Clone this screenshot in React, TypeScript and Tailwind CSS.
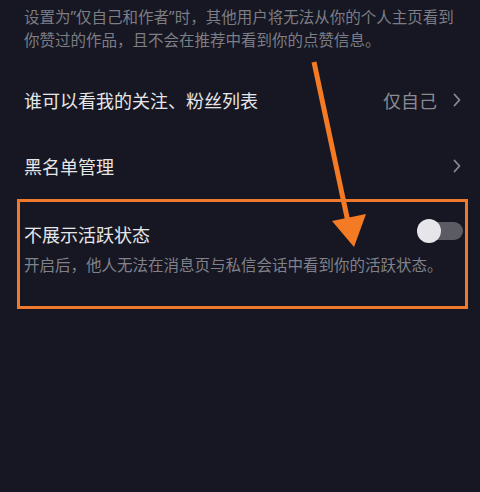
import React from 'react';

function Chevron() {
  return (
    <svg width="8" height="14" viewBox="0 0 8 14" fill="none">
      <path d="M1.5 1.5L6.5 7L1.5 12.5" stroke="#8a8b92" strokeWidth="1.8" strokeLinecap="round" strokeLinejoin="round" />
    </svg>
  );
}

function Toggle() {
  return (
    <div className="relative h-[24px] w-[46px]">
      <div className="absolute right-0 top-[3px] h-[18px] w-[38px] rounded-full bg-[#5b5c63]" />
      <div className="absolute left-0 top-0 h-[24px] w-[24px] rounded-full bg-[#e6e6ea]" />
    </div>
  );
}

// narrow latin quote inside CJK text
function Q() {
  return <span style={{ fontFamily: '"Noto Sans", sans-serif' }}>”</span>;
}

export default function App() {
  return (
    <div
      className="relative h-[492px] w-[480px] overflow-hidden bg-[#161722]"
      style={{ fontFamily: '"Noto Sans CJK SC", "Noto Sans", sans-serif' }}
    >
      {/* Description */}
      <p className="whitespace-nowrap pl-[24px] pt-[5px] text-[15.5px] leading-[22px] text-[#7c7d85]">
        设置为<Q />仅自己和作者<Q />时，其他用户将无法从你的个人主页看到
        <br />
        你赞过的作品，且不会在推荐中看到你的点赞信息。
      </p>

      {/* Rows */}
      <div className="mt-[17px]">
        <div className="flex h-[66px] items-center justify-between pl-[24px] pr-[19px]">
          <span className="text-[18px] text-[#e6e6e8]">谁可以看我的关注、粉丝列表</span>
          <div className="flex items-center gap-[16px]">
            <span className="text-[18px] text-[#8a8b92]">仅自己</span>
            <Chevron />
          </div>
        </div>
        <div className="flex h-[66px] items-center justify-between pl-[24px] pr-[19px]">
          <span className="text-[18px] text-[#e6e6e8]">黑名单管理</span>
          <Chevron />
        </div>
      </div>

      {/* Highlighted setting */}
      <div className="ml-[17px] mr-[12px] border-[3px] border-[#ef7a2e] pb-[31px] pl-[4px] pr-[2px] pt-[20px]">
        <div className="flex h-[24px] items-center justify-between">
          <span className="text-[18px] leading-[24px] text-[#e6e6e8]">不展示活跃状态</span>
          <div className="-mt-[6px]">
            <Toggle />
          </div>
        </div>
        <p className="mt-[7px] text-[15.5px] leading-[22px] text-[#80818a]">
          开启后，他人无法在消息页与私信会话中看到你的活跃状态。
        </p>
      </div>

      {/* Annotation arrow */}
      <svg className="pointer-events-none absolute left-0 top-0" width="480" height="492" viewBox="0 0 480 492">
        <line x1="314" y1="62" x2="348" y2="222" stroke="#f47b24" strokeWidth="5" />
        <polygon points="332,221 366,214 354,247" fill="#f47b24" />
      </svg>
    </div>
  );
}
